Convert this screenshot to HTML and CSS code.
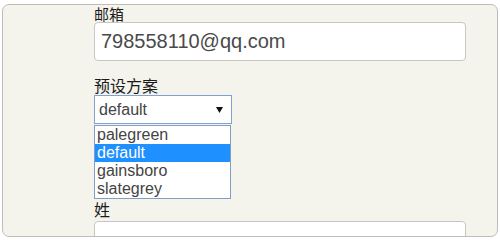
FILE: index.html
```html
<!DOCTYPE html>
<html>
<head>
<meta charset="utf-8">
<link rel="stylesheet" href="styles.css">
</head>
<body>
<div class="panel">
  <div class="label">邮箱</div>
  <div class="input email">798558110@qq.com</div>
  <div class="label gap">预设方案</div>
  <div class="select-wrap">
    <div class="select">
      <span>default</span>
      <svg class="arrow" width="7" height="6" viewBox="0 0 7 6"><path d="M0 0H7L3.5 6Z" fill="#111"/></svg>
    </div>
    <ul class="dropdown">
      <li>palegreen</li>
      <li class="active">default</li>
      <li>gainsboro</li>
      <li>slategrey</li>
    </ul>
  </div>
  <div class="label surname">姓</div>
  <div class="input last"></div>
</div>
</body>
</html>
```
FILE: styles.css
```css
html, body {
  margin: 0;
  padding: 0;
  background: #ffffff;
}
body {
  width: 500px;
  height: 240px;
  overflow: hidden;
  font-family: "Liberation Sans", Arial, "Noto Sans CJK SC", sans-serif;
}
.panel {
  box-sizing: border-box;
  margin: 4px 0 0 2px;
  width: 496px;
  height: 233px;
  background: #f5f4ec;
  border: 1px solid #c6b9b9;
  border-radius: 7px;
  padding-left: 91px;
  overflow: hidden;
}
.label {
  font-family: "Noto Sans CJK SC", sans-serif;
  font-size: 15px;
  line-height: 17px;
  color: #1a1a1a;
}
.label.gap {
  margin-top: 14px;
  font-size: 16px;
  line-height: 20px;
}
.input {
  box-sizing: border-box;
  width: 372px;
  background: #fff;
  border: 1px solid #c9c6c2;
  border-radius: 4px;
}
.email {
  height: 39px;
  padding-left: 6px;
  font-size: 20px;
  line-height: 37px;
  color: #4a4a4a;
}
.select-wrap {
  position: relative;
}
.select {
  box-sizing: border-box;
  width: 138px;
  height: 29px;
  background: #fff;
  border: 1px solid #7fa1d6;
  display: flex;
  align-items: center;
  justify-content: space-between;
  padding: 0 8px 0 4px;
  font-size: 16px;
  color: #444;
}
.arrow {
  display: block;
}
.dropdown {
  position: absolute;
  left: 0;
  top: 30px;
  z-index: 2;
  box-sizing: border-box;
  width: 137px;
  margin: 0;
  padding: 0;
  list-style: none;
  background: #fff;
  border: 1px solid #7f9dc6;
}
.dropdown li {
  height: 18px;
  line-height: 18px;
  padding-left: 2px;
  font-size: 16px;
  color: #444;
}
.dropdown li.active {
  background: #1e90ff;
  color: #fff;
}
.surname {
  margin-top: 75px;
  line-height: 20px;
  font-size: 16px;
}
.last {
  margin-top: 2px;
  height: 30px;
}
```
